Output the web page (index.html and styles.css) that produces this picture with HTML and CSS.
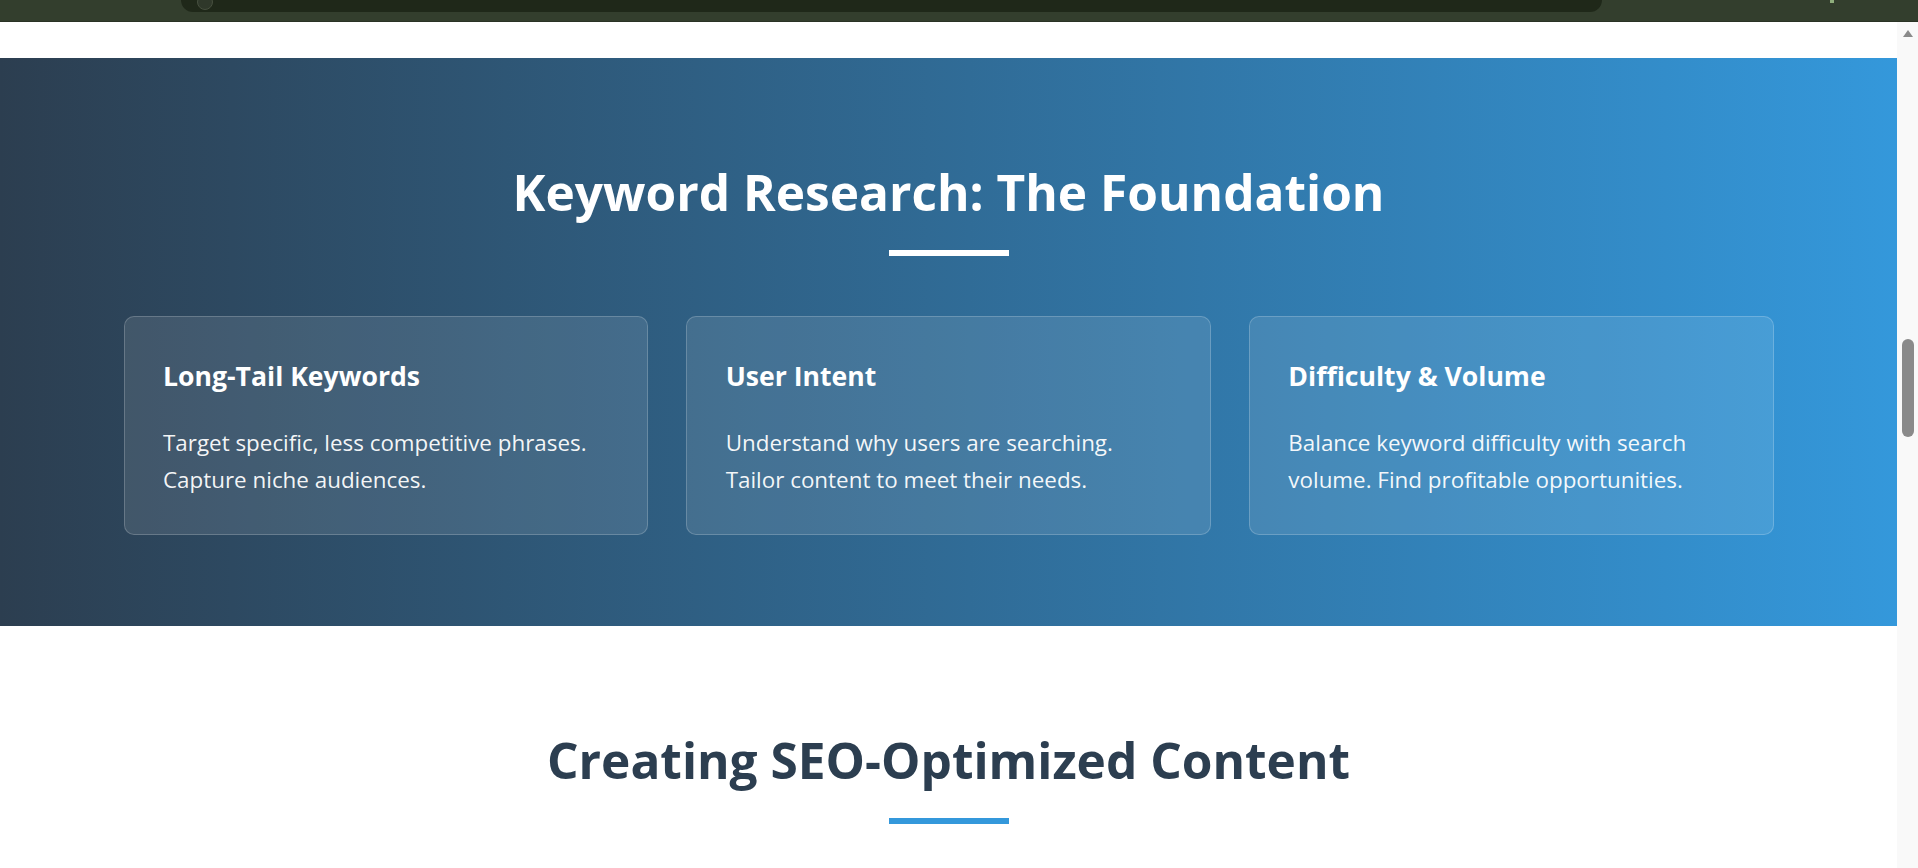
FILE: index.html
```html
<!DOCTYPE html>
<html lang="en">
<head>
<meta charset="utf-8">
<title>SEO Guide</title>
<link rel="stylesheet" href="styles.css">
</head>
<body>
  <div class="topbar">
    <div class="topbar-pill"><span class="topbar-dot"></span></div>
    <span class="topbar-icon"></span>
  </div>
  <div class="viewport">
    <main class="page">
      <div class="prev-section"></div>
      <section class="keywords">
        <h2 class="section-title light">Keyword Research: The Foundation</h2>
        <div class="title-bar light"></div>
        <div class="card-grid">
          <div class="card">
            <h3 class="card-title">Long-Tail Keywords</h3>
            <p class="card-text">Target specific, less competitive phrases. Capture niche audiences.</p>
          </div>
          <div class="card">
            <h3 class="card-title">User Intent</h3>
            <p class="card-text">Understand why users are searching. Tailor content to meet their needs.</p>
          </div>
          <div class="card">
            <h3 class="card-title">Difficulty &amp; Volume</h3>
            <p class="card-text">Balance keyword difficulty with search volume. Find profitable opportunities.</p>
          </div>
        </div>
      </section>
      <section class="content">
        <h2 class="section-title dark">Creating SEO-Optimized Content</h2>
        <div class="title-bar blue"></div>
      </section>
    </main>
    <div class="scrollbar">
      <span class="scroll-arrow"></span>
      <span class="scroll-thumb"></span>
    </div>
  </div>
</body>
</html>
```

FILE: styles.css
```css
* { box-sizing: border-box; }

html, body {
  margin: 0;
  padding: 0;
}

body {
  height: 868px;
  overflow: hidden;
  display: flex;
  flex-direction: column;
  font-family: "Open Sans", "Noto Sans", sans-serif;
  background: #ffffff;
}

.topbar {
  flex: none;
  height: 22px;
  background: #333e2d;
  border-bottom: 1px solid #2a3325;
  display: flex;
  align-items: flex-start;
  padding-left: 181px;
}

.topbar-pill {
  width: 1421px;
  height: 12px;
  background: #1f2819;
  border-radius: 0 0 14px 14px;
  display: flex;
  align-items: flex-end;
  padding-left: 16px;
  overflow: hidden;
}

.topbar-dot {
  width: 16px;
  height: 16px;
  margin-bottom: 2px;
  border-radius: 50%;
  background: #2f382a;
  border: 1px solid #47503f;
}

.topbar-icon {
  width: 4px;
  height: 3px;
  margin-left: 228px;
  background: #8fae7c;
}

.viewport {
  flex: 1;
  min-height: 0;
  display: flex;
}

.page {
  flex: 1;
  min-width: 0;
  overflow: hidden;
}

.prev-section {
  height: 36px;
  background: #ffffff;
}

.keywords {
  height: 568px;
  background: linear-gradient(90deg, #2c3e50 0%, #3498db 100%);
  padding: 105px 0 0;
}

.content {
  padding: 105px 0 0;
  background: #ffffff;
}

.section-title {
  margin: 0;
  text-align: center;
  font-size: 49.6px;
  line-height: 1.2;
  font-weight: 700;
}

.section-title.light { color: #ffffff; }
.section-title.dark { color: #2c3e50; }

.title-bar {
  width: 120px;
  height: 6px;
  margin: 27px auto 0;
}

.title-bar.light { background: #ffffff; }
.title-bar.blue { background: #3498db; }

.card-grid {
  max-width: 1650px;
  margin: 60px auto 0;
  display: grid;
  grid-template-columns: repeat(3, 1fr);
  gap: 38px;
}

.card {
  background: rgba(255, 255, 255, 0.1);
  border: 1px solid rgba(255, 255, 255, 0.2);
  border-radius: 10px;
  padding: 41px 40px 35px 38.5px;
  color: #ffffff;
}

.card-title {
  margin: 0 0 29px;
  font-size: 26.6px;
  line-height: 1.4;
  font-weight: 700;
}

.card-text {
  margin: 0;
  font-size: 22.4px;
  line-height: 37.7px;
  color: rgba(255, 255, 255, 0.94);
}

.scrollbar {
  flex: none;
  width: 21px;
  background: #f9f9f9;
  display: flex;
  flex-direction: column;
  align-items: center;
  padding-top: 8px;
}

.scroll-arrow {
  width: 0;
  height: 0;
  border-left: 5px solid transparent;
  border-right: 5px solid transparent;
  border-bottom: 7px solid #8a8a8a;
}

.scroll-thumb {
  width: 12px;
  height: 98px;
  margin-top: 302px;
  border-radius: 6px;
  background: #8a8a8a;
}
```
